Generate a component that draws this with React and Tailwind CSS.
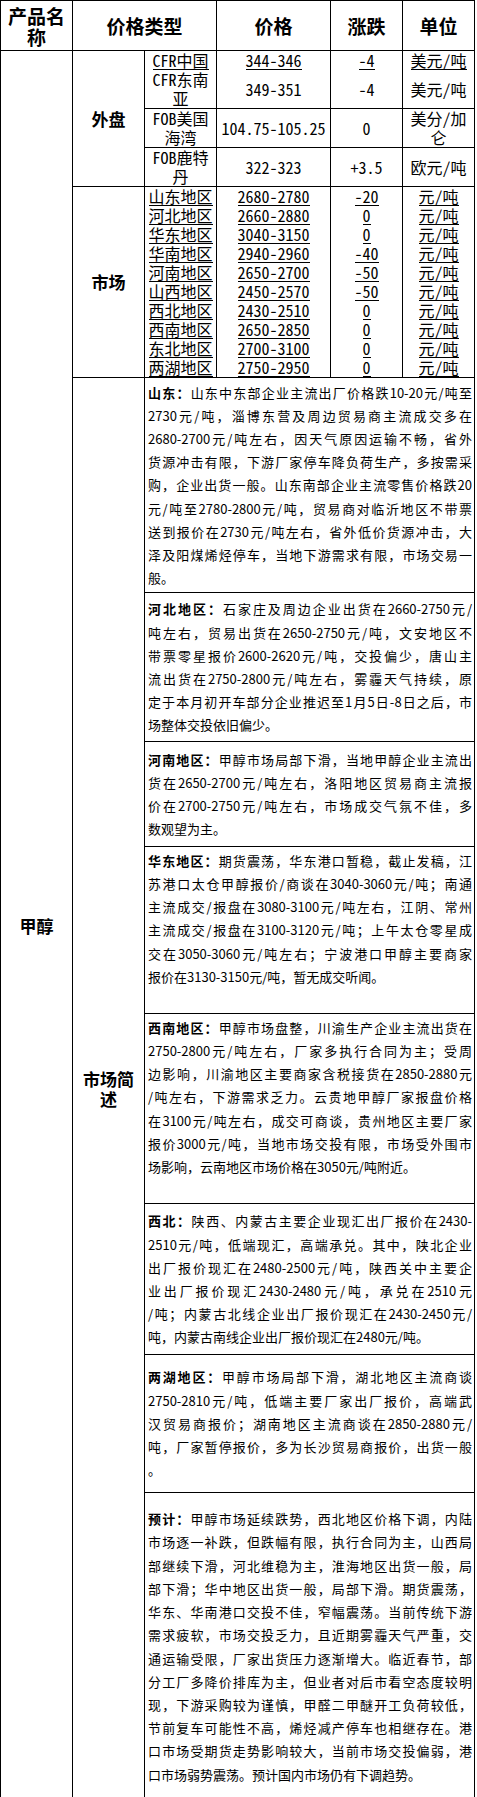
import React from "react";

const outer = [
  { name: "CFR中国", price: "344-346", chg: "-4", unit: "美元/吨", h: "h-[19px]", u: true },
  { name: "CFR东南亚", price: "349-351", chg: "-4", unit: "美元/吨", h: "h-[38px]", u: false },
  { name: "FOB美国海湾", price: "104.75-105.25", chg: "0", unit: "美分/加仑", h: "h-[38px]", u: false },
  { name: "FOB鹿特丹", price: "322-323", chg: "+3.5", unit: "欧元/吨", h: "h-[38px]", u: false },
];

const market = [
  ["山东地区", "2680-2780", "-20"],
  ["河北地区", "2660-2880", "0"],
  ["华东地区", "3040-3150", "0"],
  ["华南地区", "2940-2960", "-40"],
  ["河南地区", "2650-2700", "-50"],
  ["山西地区", "2450-2570", "-50"],
  ["西北地区", "2430-2510", "0"],
  ["西南地区", "2650-2850", "0"],
  ["东北地区", "2700-3100", "0"],
  ["两湖地区", "2750-2950", "0"],
];

const paras = [
  {
    label: "山东：",
    h: "h-[215px]",
    lines: [
      "山东中东部企业主流出厂价格跌10-20元/吨至",
      "2730元/吨，淄博东营及周边贸易商主流成交多在",
      "2680-2700元/吨左右，因天气原因运输不畅，省外",
      "货源冲击有限，下游厂家停车降负荷生产，多按需采",
      "购，企业出货一般。山东南部企业主流零售价格跌20",
      "元/吨至2780-2800元/吨，贸易商对临沂地区不带票",
      "送到报价在2730元/吨左右，省外低价货源冲击，大",
      "泽及阳煤烯烃停车，当地下游需求有限，市场交易一",
      "般。",
    ],
  },
  {
    label: "河北地区：",
    h: "h-[149px]",
    lines: [
      "石家庄及周边企业出货在2660-2750元/",
      "吨左右，贸易出货在2650-2750元/吨，文安地区不",
      "带票零星报价2600-2620元/吨，交投偏少，唐山主",
      "流出货在2750-2800元/吨左右，雾霾天气持续，原",
      "定于本月初开车部分企业推迟至1月5日-8日之后，市",
      "场整体交投依旧偏少。",
    ],
  },
  {
    label: "河南地区：",
    h: "h-[105px]",
    lines: [
      "甲醇市场局部下滑，当地甲醇企业主流出",
      "货在2650-2700元/吨左右，洛阳地区贸易商主流报",
      "价在2700-2750元/吨左右，市场成交气氛不佳，多",
      "数观望为主。",
    ],
  },
  {
    label: "华东地区：",
    h: "h-[167px]",
    blank: true,
    lines: [
      "期货震荡，华东港口暂稳，截止发稿，江",
      "苏港口太仓甲醇报价/商谈在3040-3060元/吨；南通",
      "主流成交/报盘在3080-3100元/吨左右，江阴、常州",
      "主流成交/报盘在3100-3120元/吨；上午太仓零星成",
      "交在3050-3060元/吨左右；宁波港口甲醇主要商家",
      "报价在3130-3150元/吨，暂无成交听闻。",
    ],
  },
  {
    label: "西南地区：",
    h: "h-[190px]",
    blank: true,
    lines: [
      "甲醇市场盘整，川渝生产企业主流出货在",
      "2750-2800元/吨左右，厂家多执行合同为主；受周",
      "边影响，川渝地区主要商家含税接货在2850-2880元",
      "/吨左右，下游需求乏力。云贵地甲醇厂家报盘价格",
      "在3100元/吨左右，成交可商谈，贵州地区主要厂家",
      "报价3000元/吨，当地市场交投有限，市场受外围市",
      "场影响，云南地区市场价格在3050元/吨附近。",
    ],
  },
  {
    label: "西北：",
    h: "h-[151px]",
    lines: [
      "陕西、内蒙古主要企业现汇出厂报价在2430-",
      "2510元/吨，低端现汇，高端承兑。其中，陕北企业",
      "出厂报价现汇在2480-2500元/吨，陕西关中主要企",
      "业出厂报价现汇2430-2480元/吨，承兑在2510元",
      "/吨；内蒙古北线企业出厂报价现汇在2430-2450元/",
      "吨，内蒙古南线企业出厂报价现汇在2480元/吨。",
    ],
  },
  {
    label: "两湖地区：",
    h: "h-[138px]",
    lines: [
      "甲醇市场局部下滑，湖北地区主流商谈",
      "2750-2810元/吨，低端主要厂家出厂报价，高端武",
      "汉贸易商报价；湖南地区主流商谈在2850-2880元/",
      "吨，厂家暂停报价，多为长沙贸易商报价，出货一般",
      "。",
    ],
  },
  {
    label: "预计：",
    h: "h-[308px]",
    lines: [
      "甲醇市场延续跌势，西北地区价格下调，内陆",
      "市场逐一补跌，但跌幅有限，执行合同为主，山西局",
      "部继续下滑，河北维稳为主，淮海地区出货一般，局",
      "部下滑；华中地区出货一般，局部下滑。期货震荡，",
      "华东、华南港口交投不佳，窄幅震荡。当前传统下游",
      "需求疲软，市场交投乏力，且近期雾霾天气严重，交",
      "通运输受限，厂家出货压力逐渐增大。临近春节，部",
      "分工厂多降价排库为主，但业者对后市看空态度较明",
      "现，下游采购较为谨慎，甲醛二甲醚开工负荷较低，",
      "节前复车可能性不高，烯烃减产停车也相继存在。港",
      "口市场受期货走势影响较大，当前市场交投偏弱，港",
      "口市场弱势震荡。预计国内市场仍有下调趋势。",
    ],
  },
];

const dataFont =
  "font-['Noto_Sans_Mono_CJK_SC','Noto_Sans_CJK_SC',monospace] text-[16px] leading-[19px] text-center px-[1px]";
const cellB = "border-r border-b border-black";
const cellNoB = "border-r border-black";

function U({ children, on }) {
  if (!on) return <span>{children}</span>;
  return <span className="inline-block border-b border-black leading-[17px]">{children}</span>;
}

function Para({ label, lines, blank }) {
  return (
    <div className="font-['Noto_Sans_CJK_SC',sans-serif] text-[13px] leading-[23.2px] text-black">
      {lines.map((l, i) => {
        const last = i === lines.length - 1;
        return (
          <div
            key={i}
            className={last ? "text-left" : "text-justify [text-align-last:justify]"}
          >
            {i === 0 && <span className="font-bold">{label}</span>}
            {l}
          </div>
        );
      })}
      {blank && <div className="h-[23.2px]" />}
    </div>
  );
}

export default function App() {
  const head =
    "border-r border-b border-black text-center font-bold text-[19px] leading-[21px] px-[1px] font-['Noto_Sans_CJK_SC',sans-serif]";
  const bold =
    "border-r border-b border-black text-center font-bold text-[17px] leading-[20px] px-[3px] font-['Noto_Sans_CJK_SC',sans-serif]";
  return (
    <div className="bg-white w-[477px] min-h-[1797px] text-black">
      <table className="border-separate border-spacing-0 border-t border-l border-black table-fixed w-[475px]">
        <colgroup>
          <col className="w-[72px]" />
          <col className="w-[72px]" />
          <col className="w-[72px]" />
          <col className="w-[114px]" />
          <col className="w-[72px]" />
          <col className="w-[72px]" />
        </colgroup>
        <tbody>
          <tr className="h-[50px]">
            <td className={head}>产品名称</td>
            <td className={head} colSpan={2}>价格类型</td>
            <td className={head}>价格</td>
            <td className={head}>涨跌</td>
            <td className={head}>单位</td>
          </tr>
          {outer.map((r, i) => (
            <tr key={r.name} className={r.h}>
              {i === 0 && (
                <td className={bold} rowSpan={23}>甲醇</td>
              )}
              {i === 0 && (
                <td className={bold} rowSpan={4}>外盘</td>
              )}
              <td className={`${r.u ? cellNoB : cellB} ${dataFont}`}>
                <U on={r.u}>{r.name}</U>
              </td>
              <td className={`${r.u ? cellNoB : cellB} ${dataFont}`}>
                <U on={r.u}>{r.price}</U>
              </td>
              <td className={`${r.u ? cellNoB : cellB} ${dataFont}`}>
                <U on={r.u}>{r.chg}</U>
              </td>
              <td className={`${r.u ? cellNoB : cellB} ${dataFont}`}>
                <U on={r.u}>{r.unit}</U>
              </td>
            </tr>
          ))}
          {market.map((r, i) => {
            const last = i === market.length - 1;
            const c = `${last ? cellB : cellNoB} ${dataFont}`;
            return (
              <tr key={r[0]} className="h-[19px]">
                {i === 0 && (
                  <td className={bold} rowSpan={10}>市场</td>
                )}
                <td className={c}><U on>{r[0]}</U></td>
                <td className={c}><U on>{r[1]}</U></td>
                <td className={c}><U on>{r[2]}</U></td>
                <td className={c}><U on>元/吨</U></td>
              </tr>
            );
          })}
          {paras.map((p, i) => (
            <tr key={p.label} className={p.h}>
              {i === 0 && (
                <td className={bold} rowSpan={8}>市场简述</td>
              )}
              <td colSpan={4} className="border-r border-b border-black pl-[3px] pr-[2px]">
                <Para label={p.label} lines={p.lines} blank={p.blank} />
              </td>
            </tr>
          ))}
        </tbody>
      </table>
    </div>
  );
}
